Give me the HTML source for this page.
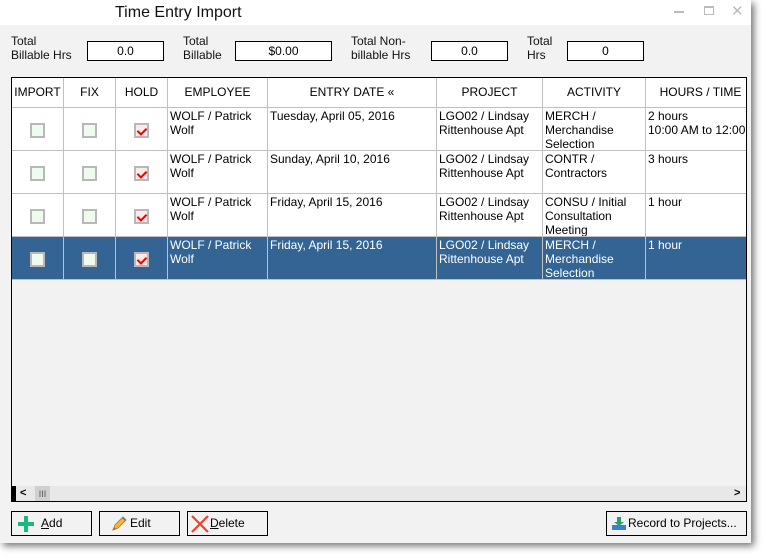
<!DOCTYPE html>
<html><head><style>
*{margin:0;padding:0;box-sizing:border-box}
body{width:762px;height:556px;background:#fff;font-family:"Liberation Sans",sans-serif;font-size:12px;color:#000;position:relative;overflow:hidden}
.a{position:absolute}
.win{left:0;top:0;width:751px;height:543px;background:#f2f2f2;box-shadow:3px 3px 7px rgba(0,0,0,.55)}
.title{left:0;top:0;width:751px;height:25px;background:#fff}
.lbl{line-height:14px;font-size:12px;color:#111}
.box{height:20px;border:1px solid #000;background:#fff;text-align:center;line-height:18px}
.grid{left:11px;top:77px;width:736px;height:425px;border:1px solid #000;background:#f2f2f2;overflow:hidden}
.cell{position:absolute;border-right:1px solid #c0c0c0;border-bottom:1px solid #c0c0c0;background:#fff;padding:1px 2px;line-height:14px;overflow:hidden;white-space:nowrap}
.hd{background:#fff;text-align:center;line-height:28px;padding:0}
.sel{background:#336494;color:#fff}
.cb{position:absolute;width:15px;height:15px;border:2px solid #b8b8b8;background:#f0fbf0;left:50%;top:15px;margin-left:-8px}
.ck{background:#fde8ea}
.ck:after{content:"";position:absolute;left:3px;top:1px;width:4px;height:7px;border:solid #e00;border-width:0 2px 2px 0;transform:rotate(45deg)}
.btn{top:511px;height:25px;border:1px solid #000;background:#f2f2f2;line-height:23px}
</style></head><body>
<div class="a win"></div>
<div class="a title"></div>
<div class="a" style="left:115px;top:4px;font-size:16px;color:#111">Time Entry Import</div>
<div class="a" style="left:674px;top:11px;width:10px;height:2px;background:#bbb"></div>
<div class="a" style="left:704px;top:6px;width:10px;height:9px;border:1px solid #bbb;border-top-width:2px"></div>
<div class="a" style="left:731px;top:2px;font-size:15px;color:#bbb">✕</div>

<div class="a lbl" style="left:11px;top:34px">Total<br>Billable Hrs</div>
<div class="a box" style="left:87px;top:41px;width:77px">0.0</div>
<div class="a lbl" style="left:183px;top:34px">Total<br>Billable</div>
<div class="a box" style="left:235px;top:41px;width:97px">$0.00</div>
<div class="a lbl" style="left:351px;top:34px">Total Non-<br>billable Hrs</div>
<div class="a box" style="left:431px;top:41px;width:77px">0.0</div>
<div class="a lbl" style="left:527px;top:34px">Total<br>Hrs</div>
<div class="a box" style="left:567px;top:41px;width:77px">0</div>

<div class="a grid">
<div class="cell hd" style="left:0;top:0;width:52px;height:30px">IMPORT</div>
<div class="cell hd" style="left:52px;top:0;width:52px;height:30px">FIX</div>
<div class="cell hd" style="left:104px;top:0;width:52px;height:30px">HOLD</div>
<div class="cell hd" style="left:156px;top:0;width:100px;height:30px">EMPLOYEE</div>
<div class="cell hd" style="left:256px;top:0;width:169px;height:30px">ENTRY DATE «</div>
<div class="cell hd" style="left:425px;top:0;width:106px;height:30px">PROJECT</div>
<div class="cell hd" style="left:531px;top:0;width:103px;height:30px">ACTIVITY</div>
<div class="cell hd" style="left:634px;top:0;width:110px;height:30px">HOURS / TIME</div>

<!-- row1 -->
<div class="cell" style="left:0;top:30px;width:52px;height:43px"><div class="cb"></div></div>
<div class="cell" style="left:52px;top:30px;width:52px;height:43px"><div class="cb"></div></div>
<div class="cell" style="left:104px;top:30px;width:52px;height:43px"><div class="cb ck"></div></div>
<div class="cell" style="left:156px;top:30px;width:100px;height:43px">WOLF / Patrick<br>Wolf</div>
<div class="cell" style="left:256px;top:30px;width:169px;height:43px">Tuesday, April 05, 2016</div>
<div class="cell" style="left:425px;top:30px;width:106px;height:43px">LGO02 / Lindsay<br>Rittenhouse Apt</div>
<div class="cell" style="left:531px;top:30px;width:103px;height:43px">MERCH /<br>Merchandise<br>Selection</div>
<div class="cell" style="left:634px;top:30px;width:110px;height:43px">2 hours<br>10:00 AM to 12:00 PM</div>
<!-- row2 -->
<div class="cell" style="left:0;top:73px;width:52px;height:43px"><div class="cb"></div></div>
<div class="cell" style="left:52px;top:73px;width:52px;height:43px"><div class="cb"></div></div>
<div class="cell" style="left:104px;top:73px;width:52px;height:43px"><div class="cb ck"></div></div>
<div class="cell" style="left:156px;top:73px;width:100px;height:43px">WOLF / Patrick<br>Wolf</div>
<div class="cell" style="left:256px;top:73px;width:169px;height:43px">Sunday, April 10, 2016</div>
<div class="cell" style="left:425px;top:73px;width:106px;height:43px">LGO02 / Lindsay<br>Rittenhouse Apt</div>
<div class="cell" style="left:531px;top:73px;width:103px;height:43px">CONTR /<br>Contractors</div>
<div class="cell" style="left:634px;top:73px;width:110px;height:43px">3 hours</div>
<!-- row3 -->
<div class="cell" style="left:0;top:116px;width:52px;height:43px"><div class="cb"></div></div>
<div class="cell" style="left:52px;top:116px;width:52px;height:43px"><div class="cb"></div></div>
<div class="cell" style="left:104px;top:116px;width:52px;height:43px"><div class="cb ck"></div></div>
<div class="cell" style="left:156px;top:116px;width:100px;height:43px">WOLF / Patrick<br>Wolf</div>
<div class="cell" style="left:256px;top:116px;width:169px;height:43px">Friday, April 15, 2016</div>
<div class="cell" style="left:425px;top:116px;width:106px;height:43px">LGO02 / Lindsay<br>Rittenhouse Apt</div>
<div class="cell" style="left:531px;top:116px;width:103px;height:43px">CONSU / Initial<br>Consultation<br>Meeting</div>
<div class="cell" style="left:634px;top:116px;width:110px;height:43px">1 hour</div>
<!-- row4 selected -->
<div class="cell sel" style="left:0;top:159px;width:52px;height:43px"><div class="cb"></div></div>
<div class="cell sel" style="left:52px;top:159px;width:52px;height:43px"><div class="cb"></div></div>
<div class="cell sel" style="left:104px;top:159px;width:52px;height:43px"><div class="cb ck"></div></div>
<div class="cell sel" style="left:156px;top:159px;width:100px;height:43px">WOLF / Patrick<br>Wolf</div>
<div class="cell sel" style="left:256px;top:159px;width:169px;height:43px">Friday, April 15, 2016</div>
<div class="cell sel" style="left:425px;top:159px;width:106px;height:43px">LGO02 / Lindsay<br>Rittenhouse Apt</div>
<div class="cell sel" style="left:531px;top:159px;width:103px;height:43px">MERCH /<br>Merchandise<br>Selection</div>
<div class="cell sel" style="left:634px;top:159px;width:110px;height:43px">1 hour</div>

<!-- scrollbar -->
<div class="a" style="left:0;top:408px;width:736px;height:16px;background:#e8e8e8"></div>
<div class="a" style="left:0;top:408px;width:4px;height:16px;background:#000"></div>
<div class="a" style="left:8px;top:409px;font-size:11px;font-weight:bold">&lt;</div>
<div class="a" style="left:23px;top:408px;width:15px;height:16px;background:#d0d0d0;font-size:9px;text-align:center;line-height:16px;color:#555">III</div>
<div class="a" style="left:722px;top:409px;font-size:11px;font-weight:bold">&gt;</div>
</div>

<div class="a btn" style="left:11px;width:81px">
<div class="a" style="left:12px;top:4px;width:4px;height:16px;background:#1cb883"></div>
<div class="a" style="left:6px;top:10px;width:16px;height:4px;background:#1cb883"></div>
<span class="a" style="left:29px;top:0"><u>A</u>dd</span></div>
<div class="a btn" style="left:99px;width:81px">
<svg class="a" style="left:10px;top:3px" width="18" height="18" viewBox="0 0 18 18"><path d="M3 15 L5 10 L13 2 L16 5 L8 13 Z" fill="#f5b73b" stroke="#c08020" stroke-width="1"/><path d="M12 3 L15 6 L16 5 L13 2Z" fill="#3a7fd0"/><path d="M3 15 L4 12 L6 14Z" fill="#777"/></svg>
<span class="a" style="left:30px;top:0">Edit</span></div>
<div class="a btn" style="left:187px;width:81px">
<svg class="a" style="left:2px;top:2px" width="20" height="20" viewBox="0 0 20 20"><path d="M2 2 L18 18 M18 2 L2 18" stroke="#e8472f" stroke-width="2.2"/></svg>
<span class="a" style="left:22px;top:0"><u>D</u>elete</span></div>
<div class="a btn" style="left:606px;width:141px">
<svg class="a" style="left:5px;top:5px" width="14" height="14" viewBox="0 0 14 14"><rect x="0" y="8" width="14" height="5" fill="#3a7fd0"/><path d="M5 0h4v5h3l-5 4-5-4h3z" fill="#2a9d6a"/></svg>
<span class="a" style="left:21px;top:0">Record to Projects...</span></div>
</body></html>
